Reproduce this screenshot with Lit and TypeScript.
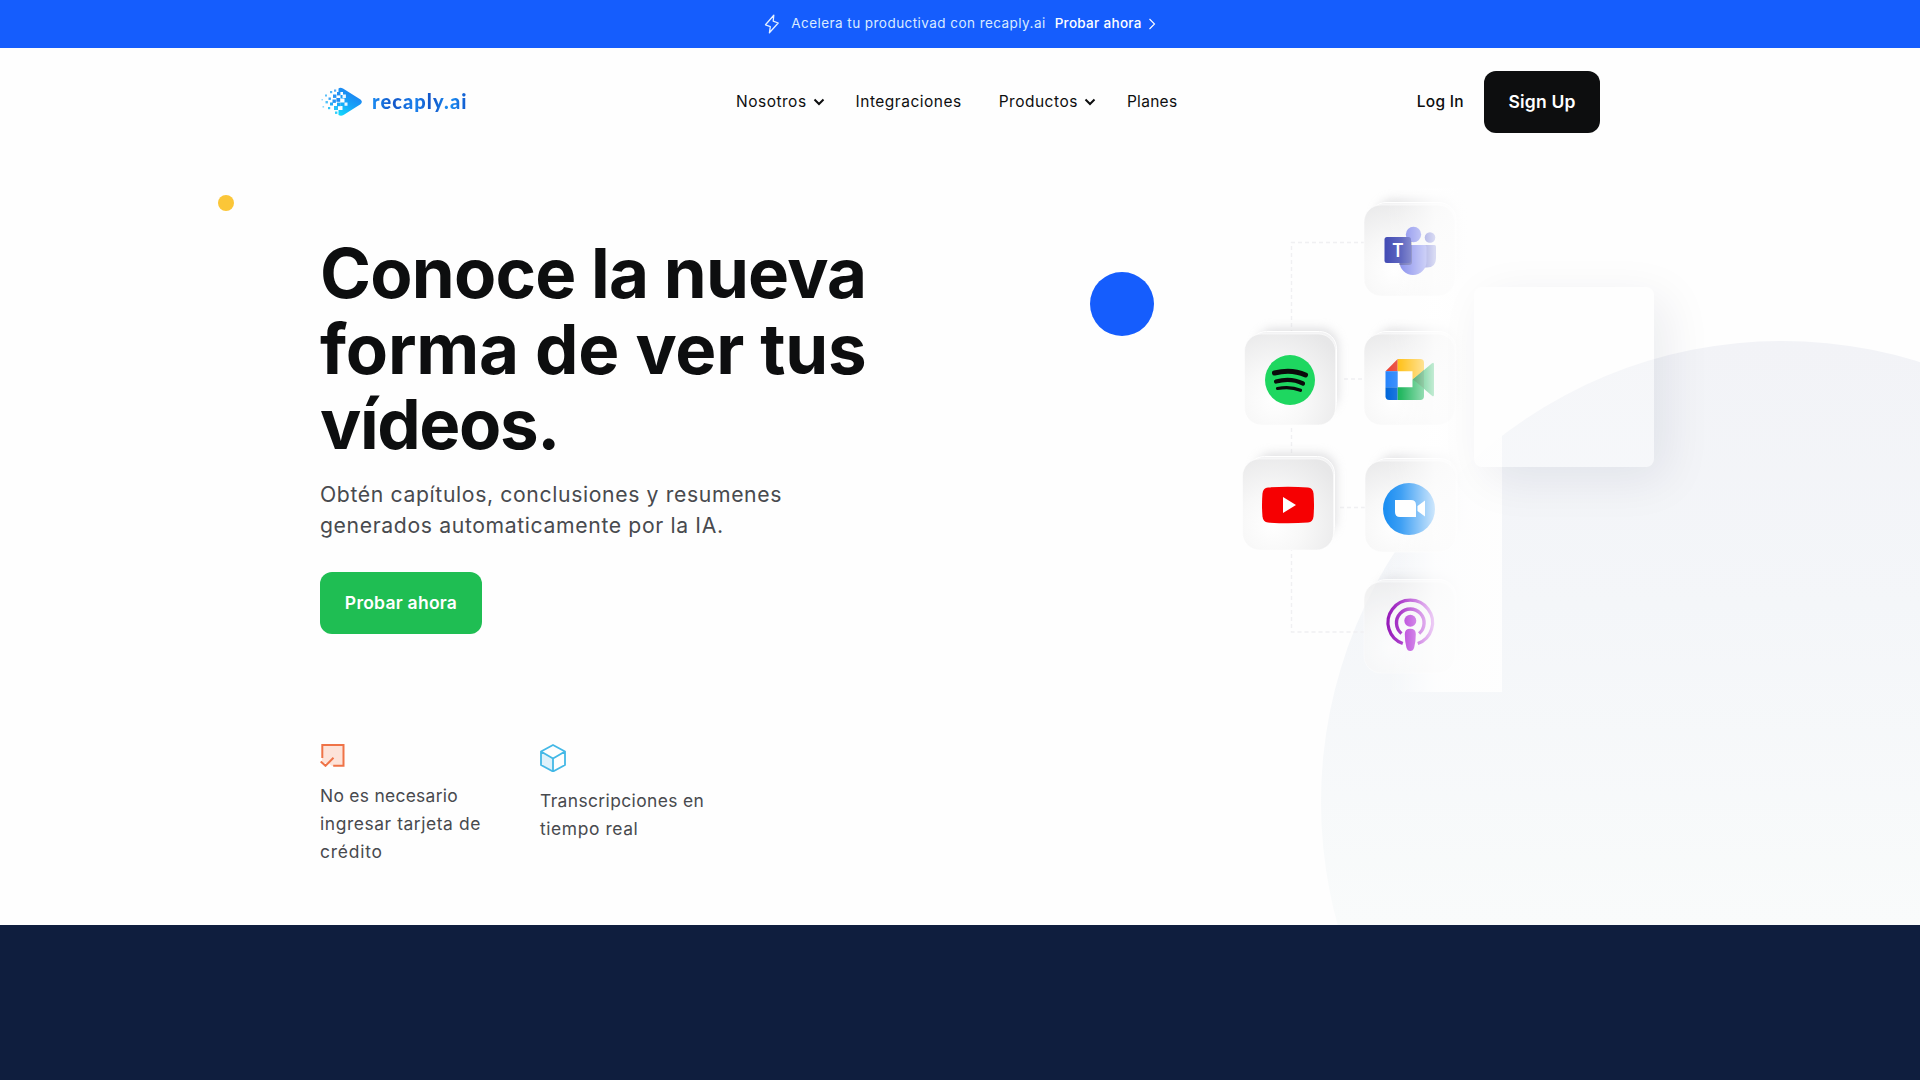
import { LitElement, html, css, svg } from "lit";
import { customElement } from "lit/decorators.js";

const chevron = html`<svg class="chevron" width="12" height="10" viewBox="0 0 12 10" fill="none" stroke="#0d0e0f" stroke-width="2"><path d="M1.5 2.5 6 7l4.5-4.5" /></svg>`;

@customElement("brand-logo")
class BrandLogo extends LitElement {
  static styles = css`
    :host { display: flex; align-items: center; height: 34px; }
    .mark { display: block; flex: none; width: 42px; height: 34px; }
    .name {
      margin-left: 10px;
      padding-bottom: 2px;
      font: 900 20px/26px "Lato", sans-serif;
      letter-spacing: 1.1px;
      background: linear-gradient(90deg, #1b8cf2, #1255c8 22%, #1b82ee 45%, #1150c4 62%, #1a92f6 80%, #1257cc);
      -webkit-background-clip: text;
      background-clip: text;
      color: transparent;
    }
  `;
  // [x, y, size, colour] of every square in the dissolving edge of the mark
  private bits: [number, number, number, string][] = [
    [1.5, 14, 1.4, "#8fd8fb"], [2.5, 21, 1.6, "#8fd8fb"], [5, 9.5, 2, "#5cc0f8"], [5.5, 16, 2.4, "#4fc0f9"],
    [8, 22, 2.2, "#2fc4f8"], [8.5, 12.5, 2.4, "#3aa5f5"], [10, 6, 2.2, "#4eb6f8"], [10, 17.5, 3, "#22a9f6"],
    [13, 9.5, 3.4, "#2794f4"], [12.5, 14.5, 3.4, "#2596f4"], [14, 21, 4, "#25c0f9"], [14, 4.5, 2.2, "#55aaf5"],
    [16.4, 13, 3.8, "#1e8bf3"], [17, 17.6, 3.6, "#17a9f8"], [15, 26.5, 2.4, "#30d0fb"], [17, 7, 3.4, "#2390f4"],
  ];
  render() {
    return html`
      <svg class="mark" viewBox="0 0 42 34">
        <defs><linearGradient id="g" x1="0" y1="1" x2="0.5" y2="0"><stop offset="0" stop-color="#12dcfc" /><stop offset="0.5" stop-color="#17a3f8" /><stop offset="1" stop-color="#1d7ff0" /></linearGradient></defs>
        <path fill="url(#g)" d="M18.500 3.400Q20.500 2.200 23 3.600L40.500 14.400Q43.200 16.800 40.500 19.200L23.500 30Q21 31.400 18.500 30V25h4v-4h-2v-3.500h4V13.500h-4V10h2.500V7h-4.500z" />
        <path fill="#fff" d="M22.500 9.500h3.400v3.500h-3.400zM24.500 17.500h3v3.300h-3z" opacity=".92" />
        ${this.bits.map(([x, y, s, c]) => svg`<rect x=${x} y=${y} width=${s} height=${s} fill=${c} />`)}
      </svg>
      <span class="name">recaply.ai</span>
    `;
  }
}

@customElement("integration-art")
class IntegrationArt extends LitElement {
  static styles = css`
    :host { display: block; width: 900px; height: 877px; position: relative; overflow: hidden; }
    svg { display: block; }
    .glass {
      position: absolute; left: 454px; top: 239px; width: 180px; height: 180px; box-sizing: border-box;
      border-radius: 8px;
      background: rgba(255, 255, 255, 0.28);
      box-shadow: 12px 12px 48px rgba(14, 20, 60, 0.08);
    }
  `;
  private card(x: number, y: number, faint = false) {
    return svg`
      <g opacity=${faint ? 0.7 : 1}>
        <rect x=${x + 12} y=${y - 6} width="82" height="84" rx="18" fill="#c4c4c8" opacity=".5" filter="url(#soft)" />
        <rect x=${x + 5} y=${y - 2.5} width="87" height="88" rx="17" fill="#f3f3f4" stroke="#fff" stroke-width="1" />
        <rect x=${x} y=${y} width="91" height="91" rx="17" fill="url(#face)" stroke="#fff" stroke-opacity=".7" stroke-width=".8" />
      </g>`;
  }
  render() {
    return html`
      <svg width="900" height="877" viewBox="1020 48 900 877" fill="none">
        <defs>
          <linearGradient id="disc" x1="0" y1="341" x2="0" y2="925" gradientUnits="userSpaceOnUse"><stop offset="0" stop-color="#f2f3f7" /><stop offset=".45" stop-color="#f4f6f9" /><stop offset="1" stop-color="#f9fbfb" /></linearGradient>
          <radialGradient id="face" cx=".33" cy=".72" r=".85"><stop offset="0" stop-color="#fff" /><stop offset=".4" stop-color="#f8f8f8" /><stop offset="1" stop-color="#e7e7e8" /></radialGradient>
          <linearGradient id="fade" x1="1386" y1="0" x2="1502" y2="0" gradientUnits="userSpaceOnUse"><stop offset="0" stop-color="#fff" stop-opacity="0" /><stop offset=".13" stop-color="#fff" stop-opacity=".15" /><stop offset=".42" stop-color="#fff" stop-opacity=".78" /><stop offset=".65" stop-color="#fefefe" stop-opacity=".92" /><stop offset="1" stop-color="#fefefe" stop-opacity=".96" /></linearGradient>
          <linearGradient id="cast" x1="1387" y1="0" x2="1434" y2="0" gradientUnits="userSpaceOnUse"><stop offset="0" stop-color="#9416b8" /><stop offset="1" stop-color="#b42fd8" /></linearGradient>
          <filter id="soft" x="-30%" y="-30%" width="160%" height="160%"><feGaussianBlur stdDeviation="5" /></filter>
        </defs>
        <circle cx="1782" cy="802" r="461" fill="url(#disc)" />
        <circle cx="1122" cy="304" r="32" fill="#155dfd" />
        <g stroke="#f0f0f2" stroke-width="1.4" stroke-dasharray="4 3">
          <path d="M1365 242.5h-73.5V632H1364" />
          <path d="M1344 379h20M1340 507.500h26" />
        </g>
        ${this.card(1364, 205)}${this.card(1244.5, 334)}${this.card(1364, 334)}
        ${this.card(1242.5, 459)}${this.card(1365, 461)}${this.card(1364, 582, true)}

        <g>
          <circle cx="1430" cy="237.500" r="5.300" fill="#5059c9" />
          <path fill="#5059c9" d="M1420 245h14.500q1.500 0 1.500 1.500V258q0 9.500-9 9.500h-7z" />
          <circle cx="1413.500" cy="234.500" r="7.700" fill="#7b83eb" />
          <path fill="#7b83eb" d="M1399 245h25.500q2 0 2 2v14.500a13.500 13.500 0 0 1-27 0z" />
          <path fill="#000" opacity=".25" d="M1399 240h10q3 0 3 3v19q0 3-3 3h-10z" />
          <rect x="1384.500" y="237" width="26.500" height="26" rx="2.500" fill="#444db5" />
          <text x="1397.800" y="256.500" text-anchor="middle" font-family="Open Sans, sans-serif" font-size="19" font-weight="600" fill="#fff">T</text>
        </g>

        <circle cx="1290" cy="380" r="25" fill="#1ed760" />
        <g stroke="#0a0a0a" stroke-linecap="round">
          <path stroke-width="5" d="M1274.500 373q17-4.500 31 2" />
          <path stroke-width="4.200" d="M1276 381.500q15-4 27 2" />
          <path stroke-width="3.200" d="M1277.500 388.500q13-2.500 23 1.800" />
        </g>

        <path fill="#fff" d="M1397 371h16v17h-16z" />
        <path fill="#e94235" d="M1385.500 371.200 1397.700 359v12.200z" />
        <path fill="#2684fc" d="M1385.500 371.200h12.200v16h-12.200z" />
        <path fill="#0066da" d="M1385.500 387.200h12.200V400h-8.500q-3.700 0-3.700-3.700z" />
        <path fill="#ffba00" d="M1397.700 359h22.600q3.700 0 3.700 3.700V371l-11.500 8.500v-8.300h-14.800z" />
        <path fill="#00ac47" d="M1412.500 379.500 1424 371v25.300q0 3.700-3.700 3.700h-22.600v-12.800h14.800z" />
        <path fill="#00ac47" d="m1413 379.500 19-16.300q2-1.500 2 1v30.500q0 2.500-2 1z" />
        <path fill="#00832d" d="m1413 379.500 11-9.500v18.500z" />

        <path fill="#f60002" d="M1268 487.500q20-1.500 40 0 5 .5 5.500 6 1 11.500 0 23-.500 5.500-5.500 6-20 1.400-40 0-5-.500-5.500-6-1-11.500 0-23 .5-5.500 5.500-6z" />
        <path fill="#fff" d="m1283 497 13 8-13 8z" />

        <circle cx="1409" cy="509" r="26" fill="#1d8ff2" />
        <path fill="#fff" d="M1395 500h16q5 0 5 5v12h-16q-5 0-5-5zM1417.500 506l7.500-5.500v16l-7.500-5.500z" />

        <g stroke="url(#cast)">
          <path stroke-width="3.200" d="M1402.800 643.500a22.300 22.300 0 1 1 15 0" />
          <path stroke-width="3.400" d="M1401.500 633.500a13.800 13.800 0 1 1 17.600 0" />
        </g>
        <circle cx="1410.300" cy="620.700" r="6" fill="#b02bd6" />
        <path fill="#b02bd6" d="M1404.800 634q0-5.200 5.500-5.200t5.500 5.200q0 8-1.600 13.500-1 3.500-3.900 3.500t-3.900-3.500q-1.600-5.500-1.600-13.500z" />

        <rect x="1386" y="188" width="116" height="504" fill="url(#fade)" />
      </svg>
      <div class="glass"></div>
    `;
  }
}

@customElement("app-root")
class AppRoot extends LitElement {
  static styles = css`
    :host {
      display: flex; flex-direction: column; height: 1080px; overflow: hidden; position: relative;
      background: #fefefe; color: #0d0e0f;
      font-family: "Inter", "Liberation Sans", sans-serif;
    }
    .banner {
      flex: none; height: 48px; box-sizing: border-box; padding-bottom: 2px; background: #155dfd; color: #d9eaff;
      display: flex; align-items: center; justify-content: center;
      font-size: 13.5px; line-height: 18px; letter-spacing: 0.45px;
    }
    .banner svg { display: block; flex: none; position: relative; top: 1px; }
    .bolt { margin-right: 11px; }
    .cta { margin-left: 9px; margin-right: 6px; color: #fff; font-weight: 500; letter-spacing: 0.3px; }
    .header {
      flex: none; z-index: 1; width: 1280px; margin: 23px auto 0; height: 62px;
      display: grid; grid-template-columns: 416px 1fr auto; align-items: center;
    }
    .nav, .auth, .item { display: flex; align-items: center; }
    .nav { gap: 37px; font-size: 15.5px; line-height: 20px; letter-spacing: 0.5px; }
    .planes { letter-spacing: 0.3px; }
    .chevron { display: block; margin: 0 -6px 0 6px; }
    .login { font-size: 15.5px; font-weight: 500; letter-spacing: 0.3px; margin-right: 20px; padding-bottom: 2px; }
    .btn {
      display: flex; align-items: center; justify-content: center; box-sizing: border-box; height: 62px;
      border-radius: 12px; color: #fff; font-size: 17.5px; font-weight: 600;
    }
    .signup { width: 116px; background: #0d0e0f; letter-spacing: 0.2px; padding-bottom: 1px; }
    .try { width: 162px; background: #1fbe53; letter-spacing: 0.25px; margin-top: 31px; }
    .hero { flex: none; z-index: 1; width: 1280px; height: 792px; margin: 0 auto; box-sizing: border-box; padding-top: 103px; }
    h1 { margin: 0; font-size: 69px; line-height: 75.6px; font-weight: 700; white-space: nowrap; }
    h1 span, .lead span, .feature span { display: block; white-space: nowrap; }
    .t1 { letter-spacing: -0.8px; }
    .t2 { letter-spacing: -0.2px; }
    .t3 { letter-spacing: -1.4px; }
    .lead { margin: 16px 0 0; font-size: 21.2px; line-height: 31px; letter-spacing: 0.63px; color: #484a4e; }
    .features { display: flex; gap: 60px; margin-top: 110px; color: #484a4e; font-size: 17.4px; line-height: 28px; }
    .feature { width: 160px; }
    .feature svg { display: block; margin-bottom: 15px; }
    .f1 { letter-spacing: 0.3px; }
    .f2 { letter-spacing: 0.58px; }
    .f3 { letter-spacing: 0.8px; }
    .f4 { letter-spacing: 0.4px; }
    .f5 { letter-spacing: 0.6px; }
    .footer { flex: 1; background: #0f1e3e; z-index: 1; }
    .art { position: absolute; right: 0; top: 48px; }
    .dot { position: absolute; left: 218px; top: 195px; width: 16px; height: 16px; border-radius: 50%; background: #fbc638; }
  `;
  render() {
    return html`
      <integration-art class="art"></integration-art>
      <div class="dot"></div>
      <div class="banner">
        <svg class="bolt" width="16" height="20" viewBox="0 0 16 20" fill="none" stroke="#e4f0ff" stroke-width="1.3" stroke-linejoin="round"><path d="M9.800 1.200 1.500 10.800l4.800 1.800-.9 6.200 8.800-9.800-5-1.900z" /></svg>
        <span>Acelera tu productivad con recaply.ai</span>
        <span class="cta">Probar ahora</span>
        <svg width="8" height="12" viewBox="0 0 8 12" fill="none" stroke="#fff" stroke-width="1.100"><path d="m1.500 1 5 5-5 5" /></svg>
      </div>
      <header class="header">
        <brand-logo></brand-logo>
        <nav class="nav">
          <span class="item">Nosotros${chevron}</span>
          <span class="item">Integraciones</span>
          <span class="item">Productos${chevron}</span>
          <span class="item planes">Planes</span>
        </nav>
        <div class="auth">
          <span class="login">Log In</span>
          <span class="btn signup">Sign Up</span>
        </div>
      </header>
      <main class="hero">
        <h1><span class="t1">Conoce la nueva</span><span class="t2">forma de ver tus</span><span class="t3">vídeos.</span></h1>
        <p class="lead"><span>Obtén capítulos, conclusiones y resumenes</span><span>generados automaticamente por la IA.</span></p>
        <div class="btn try">Probar ahora</div>
        <div class="features">
          <div class="feature">
            <svg width="26" height="23" viewBox="0 0 26 23" fill="none"><path fill="#fde3d9" d="M2 1h22v21H12L8 19H2z" /><path stroke="#ef7347" stroke-width="2" d="M2.300 14V1H23.500v20.800H13.200M.7 17.500l4.800 4.300 8-8" /></svg>
            <span class="f1">No es necesario</span><span class="f2">ingresar tarjeta de</span><span class="f3">crédito</span>
          </div>
          <div class="feature">
            <svg width="26" height="28" viewBox="0 0 26 28" fill="none"><path fill="#def2fb" d="M1 7.500 13 14v13L1 21z" /><path stroke="#43b8e6" stroke-width="1.800" stroke-linejoin="round" d="M13 1 25 7.500V21L13 27.500 1 21V7.500zM1 7.500 13 14.500 25 7.500M13 14.500v13" /></svg>
            <span class="f4">Transcripciones en</span><span class="f5">tiempo real</span>
          </div>
        </div>
      </main>
      <div class="footer"></div>
    `;
  }
}
